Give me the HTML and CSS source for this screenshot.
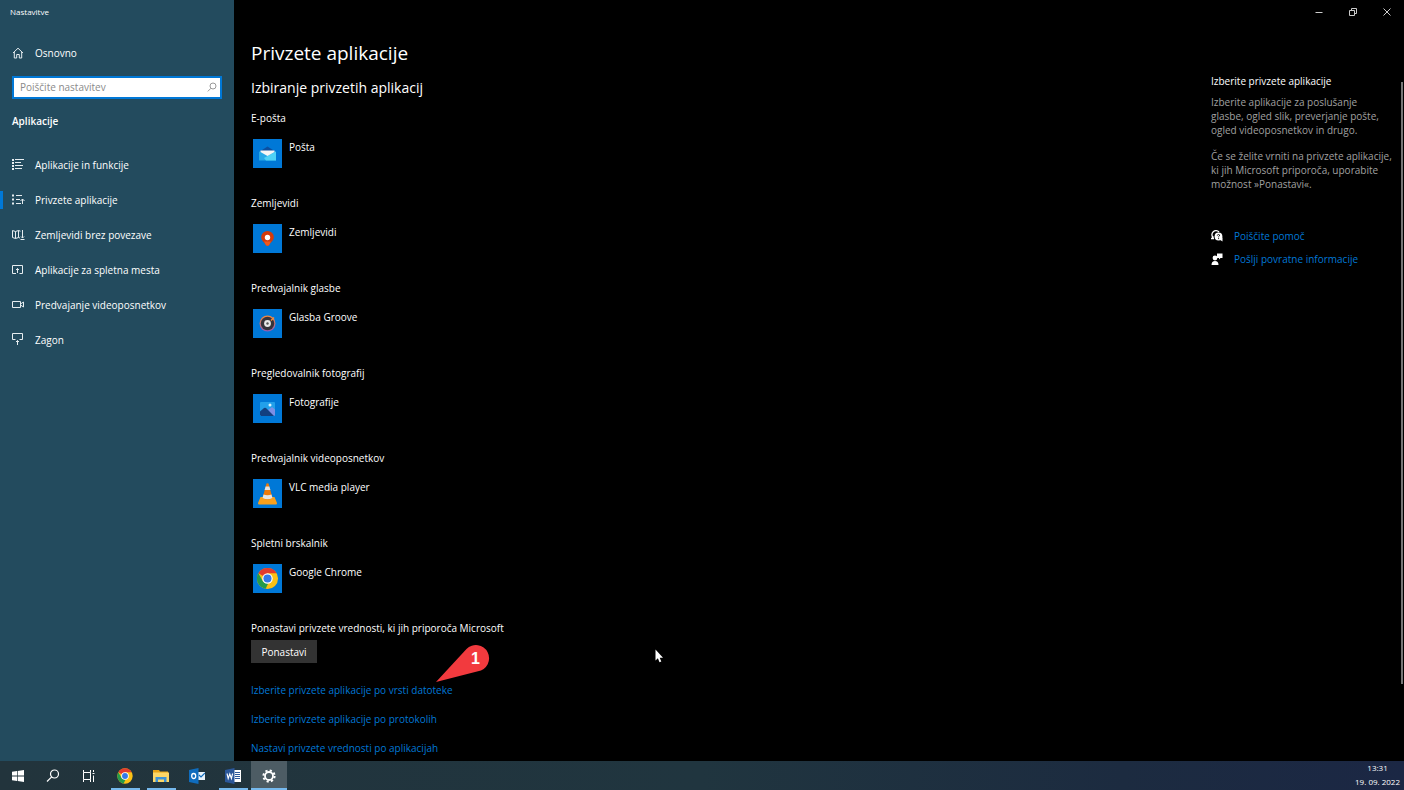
FILE: index.html
```
<!DOCTYPE html>
<html lang="sl">
<head>
	<meta charset="utf-8"/>
	<meta name="viewport" content="width=device-width, initial-scale=1">
	<title>Nastavitve</title>
	<link rel="stylesheet" href="styles.css">
</head>
<body>
	<div class="window">
		<nav class="sidebar">
			<div class="app-title">Nastavitve</div>
			<a class="home" href="#">
				<svg class="icon" viewBox="0 0 12 12"><path d="M1 6 6 1.2 11 6M2.3 5v6h2.4V7.5h2.6V11h2.4V5"/></svg>
				Osnovno
			</a>
			<div class="search">
				<input type="text" aria-label="Poiščite nastavitev" placeholder="Poiščite nastavitev">
				<svg class="search-icon" viewBox="0 0 10 10"><circle cx="6" cy="4" r="3"/><path d="M4 6.2.8 9.4"/></svg>
			</div>
			<h2 class="nav-heading">Aplikacije</h2>
			<ul class="nav-list">
				<li><a href="#">
					<svg class="icon" viewBox="0 0 12 12"><path d="M3 .5h9M3 3.5h6M3 6.5h8M3 9.5h7"/><path class="dots" d="M1 0v11"/></svg>
					Aplikacije in funkcije
				</a></li>
				<li class="active"><a href="#">
					<svg class="icon" viewBox="0 0 12 12"><path d="M4 1.5h6M4 5.5h4M4 9.5h5M10.5 10V5M8.5 7l2-2 2 2"/><path class="dots" d="M1 .5v2M1 4.5v2M1 8.5v2"/></svg>
					Privzete aplikacije
				</a></li>
				<li><a href="#">
					<svg class="icon" viewBox="0 0 12 12"><path d="m8 9-1.5-.5-3 1-3-1v-7l3 1 3-1 2 .7M3.5 2.5v7M6.5 1.5v7M10.5 1v8M9 7.500 10.5 9 12 7.500M8.5 10.5h4"/></svg>
					Zemljevidi brez povezave
				</a></li>
				<li><a href="#">
					<svg class="icon" viewBox="0 0 12 12"><path d="M4 9.5H.5v-8h10v8h-3M5.5 9V4.500M4 6l1.5-1.500L7 6"/></svg>
					Aplikacije za spletna mesta
				</a></li>
				<li><a href="#">
					<svg class="icon" viewBox="0 0 12 12"><path d="M.5 2.5h8v6h-8zM8.500 5l3-2v5l-3-2"/></svg>
					Predvajanje videoposnetkov
				</a></li>
				<li><a href="#">
					<svg class="icon" viewBox="0 0 12 12"><path d="M3.5 5.5h-3v-6h10v6h-3M5.500 11V6.500M4 8l1.500-1.500L7 8"/></svg>
					Zagon
				</a></li>
			</ul>
		</nav>

		<div class="page">
			<header class="titlebar">
				<button type="button" aria-label="Minimiraj"><svg viewBox="0 0 10 10"><path d="M1.5 5.5h7"/></svg></button>
				<button type="button" aria-label="Obnovi"><svg viewBox="0 0 10 10"><path d="M1.5 3.5h5v5h-5zM3.5 3V1.5h5v5H7"/></svg></button>
				<button type="button" aria-label="Zapri"><svg viewBox="0 0 10 10"><path d="m1.5 1.5 7 7M8.5 1.5l-7 7"/></svg></button>
			</header>

			<div class="columns">
				<main class="content">
					<h1>Privzete aplikacije</h1>
					<h2>Izbiranje privzetih aplikacij</h2>

					<section class="group">
						<h3>E-pošta</h3>
						<button type="button" class="app">
							<svg class="tile" viewBox="0 0 29 29">
								<path fill="#0c4fa0" d="m6 13 8.500-5.500L23 13z"/>
								<path fill="#27a9e8" d="M6 12.500h17v9H6z"/>
								<path fill="#4fd2f6" d="M23 12.500v9H13l-2-2.500z"/>
								<path fill="#f6f6f6" d="M7.500 11.500h14v1.500l-7 4-7-4z"/>
							</svg>
							Pošta
						</button>
					</section>

					<section class="group">
						<h3>Zemljevidi</h3>
						<button type="button" class="app">
							<svg class="tile" viewBox="0 0 29 29">
								<path fill="#d43b0c" d="M14.500 7a6.300 6.300 0 0 1 6.300 6.300c0 3.500-3 4.500-4.300 7.200-1 1.800-3 1.800-4 0-1.300-2.700-4.300-3.700-4.300-7.200A6.300 6.300 0 0 1 14.500 7z"/>
								<path fill="#f0591c" d="M11 17.500h7l-1.500 3c-1 1.800-3 1.800-4 0z"/>
								<circle cx="14.5" cy="13.5" r="2.7" fill="#fff"/>
							</svg>
							Zemljevidi
						</button>
					</section>

					<section class="group">
						<h3>Predvajalnik glasbe</h3>
						<button type="button" class="app">
							<svg class="tile" viewBox="0 0 29 29">
								<defs>
									<linearGradient id="ring" x1="0" y1="0" x2="0" y2="1"><stop offset="0" stop-color="#f58a3c"/><stop offset="1" stop-color="#8b5bb8"/></linearGradient>
								</defs>
								<circle cx="14.5" cy="14.5" r="8" fill="url(#ring)"/>
								<circle cx="14.5" cy="14.5" r="6.7" fill="#35333a"/>
								<path stroke="#f58a3c" stroke-width="1.5" d="m18 11.500 3-3"/>
								<circle cx="14.5" cy="14.5" r="3.4" fill="#e8e8e8"/>
								<circle cx="14.5" cy="14.5" r="1.2" fill="#555"/>
							</svg>
							Glasba Groove
						</button>
					</section>

					<section class="group">
						<h3>Pregledovalnik fotografij</h3>
						<button type="button" class="app">
							<svg class="tile" viewBox="0 0 29 29">
								<rect x="7" y="8" width="15" height="14" rx="1" fill="#22a0ea"/>
								<path fill="#7b8fe6" d="m15 16 4-3 3 2.500V21l-1 1h-3z"/>
								<path fill="#123f80" d="m7 17.500 4-3.500q1-.7 2 0l8 8H8l-1-1z"/>
								<circle cx="17" cy="11" r="1.5" fill="#d8f4ff"/>
							</svg>
							Fotografije
						</button>
					</section>

					<section class="group">
						<h3>Predvajalnik videoposnetkov</h3>
						<button type="button" class="app">
							<svg class="tile" viewBox="0 0 29 29">
								<path fill="#f9a01b" d="M7.500 18h14l2.500 6q0 1.500-1 1.500H6q-1 0-1-1.500z"/>
								<path fill="#ee7a0a" d="M13.500 4.500q1-.7 2 0L19.500 19q-5 3.500-10 0z"/>
								<path fill="#e4e4e4" d="M12.600 7.500h3.800l1 3.500h-5.800zM10.500 15.500q4 1.500 8 0l1 3.500q-5 2.500-10 0z"/>
							</svg>
							VLC media player
						</button>
					</section>

					<section class="group">
						<h3>Spletni brskalnik</h3>
						<button type="button" class="app">
							<svg class="tile" viewBox="0 0 29 29"><use href="#chrome" x="3.5" y="3.5" width="22" height="22"/></svg>
							Google Chrome
						</button>
					</section>

					<section class="reset">
						<h3>Ponastavi privzete vrednosti, ki jih priporoča Microsoft</h3>
						<button type="button" class="reset-button">Ponastavi</button>
					</section>

					<ul class="links">
						<li>
							<a href="#">Izberite privzete aplikacije po vrsti datoteke</a>
							<div class="callout">
								<svg viewBox="0 0 54 38"><path fill="#f23a3e" d="M0 37 30.500 4A13.200 13.200 0 1 1 42 26.300z"/></svg>
								<span>1</span>
							</div>
						</li>
						<li><a href="#">Izberite privzete aplikacije po protokolih</a></li>
						<li><a href="#">Nastavi privzete vrednosti po aplikacijah</a></li>
					</ul>
				</main>

				<aside class="help">
					<h3>Izberite privzete aplikacije</h3>
					<p>Izberite aplikacije za poslušanje<br>glasbe, ogled slik, preverjanje pošte, ogled videoposnetkov in drugo.</p>
					<p>Če se želite vrniti na privzete aplikacije, ki jih Microsoft priporoča, uporabite možnost »Ponastavi«.</p>
					<div class="help-links">
						<a href="#">
							<svg viewBox="0 0 12 12"><path fill="none" stroke="#fff" stroke-width="1.3" d="M2 7.500A3.800 3.800 0 1 1 8 2M2.500 6.500.7 8.500H3"/><circle cx="7.5" cy="6.5" r="3.9" fill="#fff"/><path fill="#fff" d="m8.500 9.500 3-2v4z"/><path fill="none" stroke="#000" stroke-width=".9" d="M6.300 5.600q.2-1.200 1.300-1.100 1.400.2.900 1.300l-.9.900v.6M7.600 8.100v1"/></svg>
							Poiščite pomoč
						</a>
						<a href="#">
							<svg viewBox="0 0 12 12"><path fill="#fff" d="M6 .5h5.500V5h-2L8 6.500V5H6z"/><circle cx="4" cy="5" r="2.4" fill="#fff"/><path fill="#fff" d="M.5 12q0-4 3.500-4t3.500 4z"/></svg>
							Pošlji povratne informacije
						</a>
					</div>
				</aside>
			</div>
			<div class="scrollbar"></div>
			<svg class="cursor" viewBox="0 0 9 14"><path fill="#fff" d="M.5.5v11l2.400-2.300 1.600 4 1.800-.8-1.600-3.700H8z"/></svg>
		</div>
	</div>

	<footer class="taskbar">
		<div class="tasks">
			<button type="button" class="start" aria-label="Start"><svg viewBox="0 0 16 16"><path fill="#fff" d="m2 3.700 5-.7v4.600H2zM7.700 2.900 14 2v5.600H7.700zM2 8.400h5V13l-5-.7zM7.700 8.400H14V14l-6.300-.9z"/></svg></button>
			<button type="button" aria-label="Iskanje"><svg viewBox="0 0 16 16"><g fill="none" stroke="#fff" stroke-width="1.2"><circle cx="9.5" cy="6" r="4"/><path d="M6.700 8.800 2 13.500"/></g></svg></button>
			<button type="button" aria-label="Pogled opravil"><svg viewBox="0 0 16 16"><path fill="none" stroke="#fff" d="M2.500 2v2.500h7V2M2.500 14v-2.500h7V14M2.500 4.500v7M9.500 4.500v7M12.500 2v2M12.500 7.500V14M11.500 5.500h2"/></svg></button>
			<button type="button" class="open" aria-label="Google Chrome"><svg viewBox="0 0 16 16">
				<symbol id="chrome" viewBox="0 0 24 24">
					<circle cx="12" cy="12" r="11.5" fill="#fbc116"/>
					<path fill="#e33b2e" d="M12 12 2 6.300A11.500 11.500 0 0 1 22 6.300H12z"/>
					<path fill="#259b4b" d="M2 6.300 7 15l5 2.500 1-.5-3 6.300A11.500 11.500 0 0 1 2 6.300z"/>
					<circle cx="12" cy="12" r="5.7" fill="#fff"/>
					<circle cx="12" cy="12" r="4.4" fill="#3479e8"/>
				</symbol>
				<use href="#chrome" width="16" height="16"/>
			</svg></button>
			<button type="button" class="open" aria-label="Raziskovalec"><svg viewBox="0 0 16 16"><path fill="#e8a317" d="M0 2h6l1 1.500h8V6H0z"/><path fill="#fcd667" d="M0 4.500h16V14H0z"/><path fill="#3d92d6" d="M2.500 14V9h11v5H11v-2.500H5V14z"/></svg></button>
			<button type="button" aria-label="Outlook"><svg viewBox="0 0 16 16"><path fill="#e9f3fb" d="M9 4h7v8H9z"/><path fill="none" stroke="#0f6cbd" stroke-width="1.2" d="m10 7 2 2 4-4"/><path fill="#0f6cbd" d="m0 2 9.500-2v16L0 14z"/><ellipse cx="4.7" cy="8" rx="2" ry="2.5" fill="none" stroke="#fff" stroke-width="1.3"/></svg></button>
			<button type="button" class="open" aria-label="Word"><svg viewBox="0 0 16 16"><path fill="#fff" d="M9 2h7v12H9z"/><path stroke="#2b579a" d="M10 4.500h5M10 6.500h5M10 8.500h5M10 10.500h5"/><path fill="#2b579a" d="m0 2 9.500-2v16L0 14z"/><path fill="none" stroke="#fff" stroke-width="1.1" d="m2 5.500 1.200 5L4.800 6l1.600 4.500 1.200-5"/></svg></button>
			<button type="button" class="open current" aria-label="Nastavitve"><svg viewBox="0 0 16 16"><circle cx="8" cy="8" r="5.6" fill="none" stroke="#fff" stroke-width="2" stroke-dasharray="2.2"/><circle cx="8" cy="8" r="4" fill="none" stroke="#fff" stroke-width="1.8"/></svg></button>
		</div>
		<div class="clock">
			<time>13:31</time>
			<time>19. 09. 2022</time>
		</div>
	</footer>
</body>
</html>
```
FILE: styles.css
```
* {
	box-sizing: border-box;
}

body {
	margin: 0;
	height: 100vh;
	display: flex;
	flex-direction: column;
	overflow: hidden;
	background: #000;
	color: #fff;
	font-family: "Open Sans", "Noto Sans", sans-serif;
	font-size: 10px;
	line-height: 16px;
}

h1, h2, h3, p, ul {
	margin: 0;
	padding: 0;
	font-weight: normal;
}

ul {
	list-style: none;
}

a {
	color: #0078d7;
	text-decoration: none;
}

button {
	border: 0;
	padding: 0;
	background: none;
	color: inherit;
	font: inherit;
}

svg {
	display: block;
	flex: none;
}

.window {
	flex: 1;
	min-height: 0;
	display: grid;
	grid-template-columns: 234px 1fr;
}

/* sidebar */

.sidebar {
	background: #234b5e;
	padding-top: 4px;
}

.sidebar a {
	display: flex;
	align-items: center;
	gap: 11px;
	padding-left: 12px;
	color: #fff;
}

.app-title {
	padding-left: 10px;
	font-size: 8px;
}

.home {
	margin-top: 25px;
}

.icon {
	width: 12px;
	height: 12px;
	overflow: visible;
	fill: none;
	stroke: #e6edf0;
	stroke-width: 1;
}

.icon .dots {
	stroke-width: 2;
	stroke-dasharray: 2 1;
}

.search {
	position: relative;
	margin: 15px 12px 0;
}

.search input {
	display: block;
	width: 100%;
	height: 23px;
	padding: 0 24px 2px 6px;
	border: 2px solid #0078d7;
	background: #fff;
	font: inherit;
}

.search input::placeholder {
	color: #8a8a8a;
}

.search-icon {
	position: absolute;
	top: 6px;
	right: 5px;
	width: 10px;
	height: 10px;
	fill: none;
	stroke: #999;
}

.nav-heading {
	margin: 14px 12px 18px;
	font-size: 10px;
	font-weight: 600;
}

.nav-list a {
	height: 35px;
}

.nav-list .active {
	background: linear-gradient(#0078d7, #0078d7) 0 center / 3px 18px no-repeat;
}

/* page */

.page {
	position: relative;
	min-height: 0;
	overflow: hidden;
}

.titlebar {
	display: flex;
	justify-content: flex-end;
	height: 24px;
}

.titlebar button {
	width: 34px;
	display: flex;
	align-items: center;
	justify-content: center;
}

.titlebar svg {
	width: 10px;
	height: 10px;
	fill: none;
	stroke: #ccc;
}

.columns {
	display: flex;
	justify-content: space-between;
	padding-left: 17px;
}

.content {
	flex: 1;
	padding-top: 14px;
}

.content h1 {
	font-size: 19px;
	line-height: 30px;
}

.content h2 {
	margin-top: 10px;
	font-size: 14px;
	line-height: 20px;
}

.content h3 {
	font-size: 10px;
}

.group {
	margin: 12px 0 27px;
}

.group + .group {
	margin-top: 0;
}

.app {
	display: flex;
	gap: 7px;
	margin: 13px 0 0 2px;
}

.tile {
	width: 29px;
	height: 29px;
	background: #0078d7;
}

.reset-button {
	display: block;
	margin-top: 4px;
	width: 66px;
	height: 23px;
	background: #333;
}

.links {
	display: grid;
	justify-items: start;
	gap: 13px;
	margin-top: 19px;
}

.links li {
	position: relative;
}

.callout {
	position: absolute;
	right: -37px;
	bottom: 15px;
	width: 54px;
	height: 38px;
}

.callout span {
	position: absolute;
	top: 6px;
	right: 8px;
	width: 12px;
	text-align: center;
	font-family: "Liberation Sans", sans-serif;
	font-size: 16px;
	font-weight: bold;
}

.help {
	width: 193px;
	padding: 49px 10px 0 0;
	line-height: 14px;
	color: #a0a0a0;
}

.help h3 {
	margin-bottom: 6px;
	font-size: 10px;
	line-height: 16px;
	color: #fff;
}

.help p {
	margin-bottom: 12px;
}

.help-links {
	display: grid;
	gap: 7px;
	margin-top: 37px;
	line-height: 16px;
}

.help-links a {
	display: flex;
	align-items: center;
	gap: 11px;
}

.help-links svg {
	width: 12px;
	height: 12px;
}

.scrollbar {
	position: absolute;
	top: 82px;
	right: 1px;
	bottom: 77px;
	width: 2px;
	background: #777;
}

.cursor {
	position: absolute;
	top: 649px;
	left: 421px;
	width: 9px;
	height: 14px;
}

/* taskbar */

.taskbar {
	display: flex;
	justify-content: space-between;
	height: 29px;
	background: linear-gradient(90deg, #22343c, #20353f 50%, #1c2b40 80%, #1b2744);
}

.tasks {
	display: flex;
}

.tasks button {
	width: 36px;
	display: flex;
	align-items: center;
	justify-content: center;
}

.tasks .start {
	width: 35px;
}

.tasks svg {
	width: 16px;
	height: 16px;
}

.tasks .open {
	background: linear-gradient(#76b9ed, #76b9ed) center bottom / 29px 2px no-repeat;
}

.tasks .current {
	background-color: #4d5c64;
	background-size: 100% 2px;
}

.clock {
	display: flex;
	flex-direction: column;
	padding-right: 4px;
	text-align: center;
	font-size: 8px;
	line-height: 14px;
}
```
